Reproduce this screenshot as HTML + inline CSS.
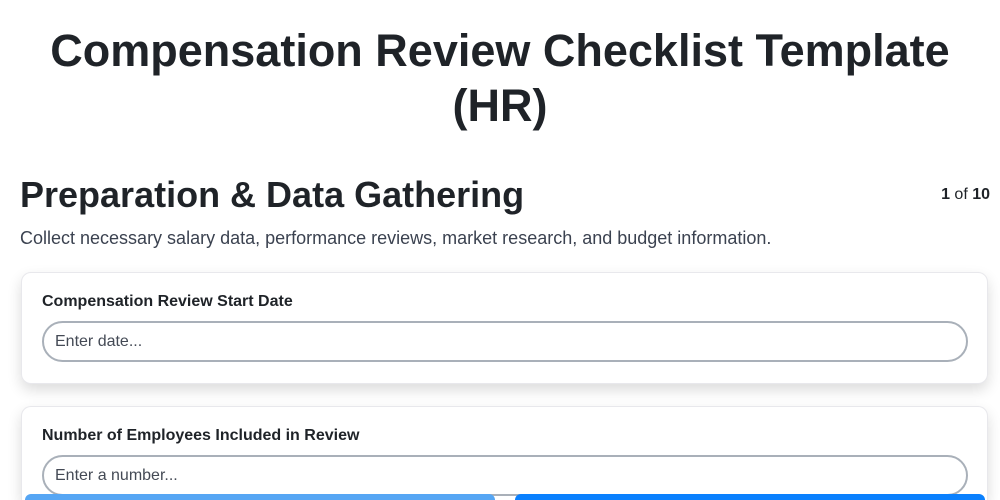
<!DOCTYPE html>
<html style="height:500px;overflow:hidden"><head><meta charset="utf-8"><style>
*{box-sizing:border-box}
body{margin:0;width:1000px;height:500px;overflow:hidden;background:#fff;font-family:"Liberation Sans",Arial,sans-serif;color:#1f2328;position:relative}
h1{margin:0;position:absolute;top:23px;left:0;width:1000px;text-align:center;font-size:45px;line-height:55px;font-weight:bold;color:#1f2328}
h2{margin:0;position:absolute;left:20px;top:173px;font-size:36px;line-height:44px;font-weight:bold}
.pg{position:absolute;right:10px;top:185px;font-size:16px;line-height:20px}
.sub{position:absolute;left:20px;top:227px;font-size:18px;line-height:22px;color:#3b4250}
.card{position:absolute;left:21px;width:967px;background:#fff;border:1px solid #e8e8ec;border-radius:10px;box-shadow:0 6px 14px rgba(0,0,0,0.14)}
.lab{position:absolute;left:20px;top:20px;font-size:16px;font-weight:bold;color:#1f2328}
.inp{position:absolute;left:20px;width:926px;height:41px;border:2px solid #a9b0b9;border-radius:21px;padding-left:11px;font-size:16px;line-height:37px;color:#444a55}
.btn{position:absolute;top:494px;width:470px;height:6px;border-radius:15px 15px 0 0}
</style></head><body>
<h1>Compensation Review Checklist Template<br>(HR)</h1>
<h2>Preparation &amp; Data Gathering</h2>
<div class="pg"><b>1</b> of <b>10</b></div>
<div class="sub">Collect necessary salary data, performance reviews, market research, and budget information.</div>
<div class="card" style="top:272px;height:112px"><div class="lab">Compensation Review Start Date</div><div class="inp" style="top:48px">Enter date...</div></div>
<div class="card" style="top:406px;height:94px;border-bottom:none;border-radius:10px 10px 0 0"><div class="lab">Number of Employees Included in Review</div><div class="inp" style="top:48px">Enter a number...</div></div>
<div class="btn" style="left:25px;background:#56a6f4"></div>
<div class="btn" style="left:515px;background:#0a80fe"></div>
</body></html>
